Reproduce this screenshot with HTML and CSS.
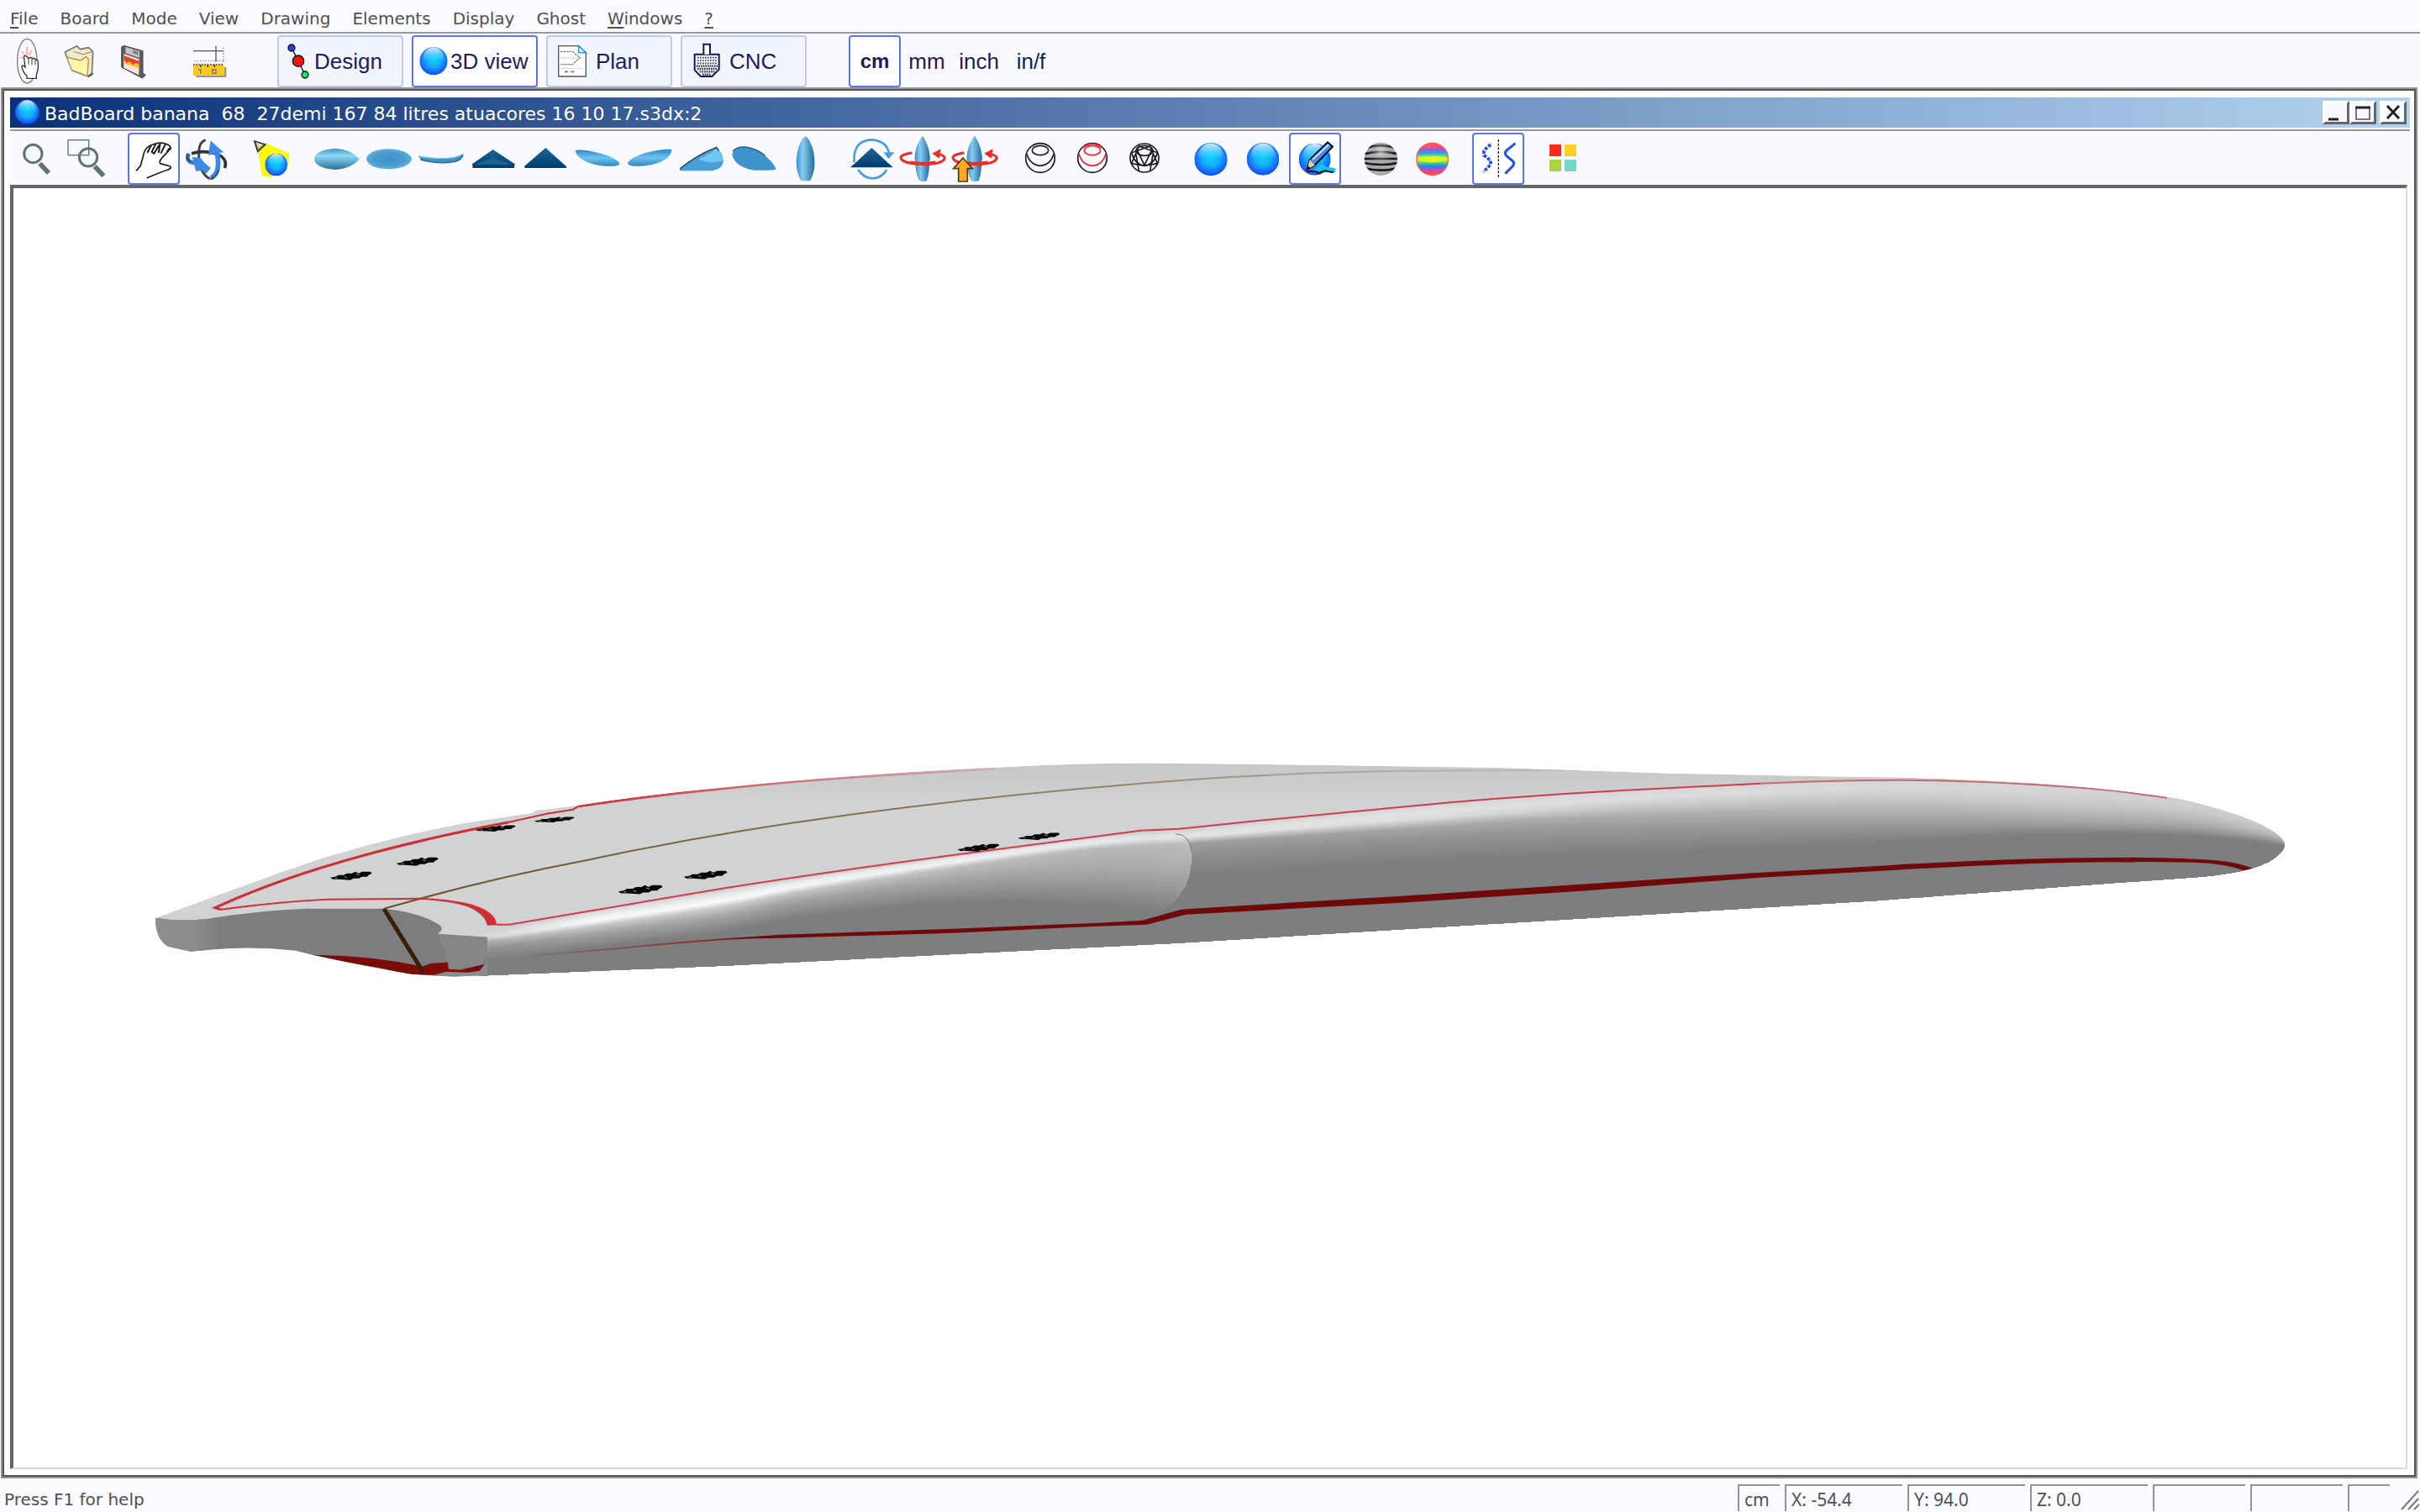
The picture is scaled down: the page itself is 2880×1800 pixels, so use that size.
FILE: index.html
```html
<!DOCTYPE html>
<html lang="en">
<head>
<meta charset="utf-8">
<title>BadBoard banana - 3D view</title>
<link rel="stylesheet" href="styles.css">
</head>
<body>
<svg class="defs" width="0" height="0" aria-hidden="true">
  <defs>
    <radialGradient id="ball" cx=".5" cy=".42" r=".6"><stop offset="0" stop-color="#08d4ff"/><stop offset=".45" stop-color="#14b0fa"/><stop offset="1" stop-color="#1440ff"/></radialGradient>
    <linearGradient id="gloss" x2="0" y2="1"><stop offset="0" stop-color="#fff" stop-opacity=".85"/><stop offset=".35" stop-color="#bff4ff" stop-opacity=".3"/><stop offset=".55" stop-color="#fff" stop-opacity="0"/></linearGradient>
    <linearGradient id="bottomView" x2="0" y2="1"><stop offset="0" stop-color="#3f96bf"/><stop offset=".35" stop-color="#8fd8fa"/><stop offset="1" stop-color="#2c6f94"/></linearGradient>
    <radialGradient id="deckView"><stop offset="0" stop-color="#4091c8"/><stop offset=".7" stop-color="#4a9cd0"/><stop offset="1" stop-color="#5fb2dd"/></radialGradient>
    <linearGradient id="upright"><stop offset="0" stop-color="#3590cc"/><stop offset=".35" stop-color="#86ccf0"/><stop offset="1" stop-color="#246a9c"/></linearGradient>
    <linearGradient id="pyramid" x2="0" y2="1"><stop offset="0" stop-color="#1a6598"/><stop offset="1" stop-color="#003c6e"/></linearGradient>
    <linearGradient id="tilt" x2="0" y2="1"><stop offset="0" stop-color="#2c8ac4"/><stop offset=".5" stop-color="#6cc4f4"/><stop offset="1" stop-color="#2f86b8"/></linearGradient>
    <linearGradient id="rainbow" x2="0" y2="1"><stop offset="0" stop-color="#f66"/><stop offset=".12" stop-color="#ff4a7a"/><stop offset=".22" stop-color="#8a60e8"/><stop offset=".32" stop-color="#20a8f0"/><stop offset=".4" stop-color="#60e070"/><stop offset=".46" stop-color="#d8f420"/><stop offset=".54" stop-color="#d8f420"/><stop offset=".63" stop-color="#30d090"/><stop offset=".72" stop-color="#2080f0"/><stop offset=".82" stop-color="#b050d0"/><stop offset=".9" stop-color="#ff4058"/><stop offset="1" stop-color="#ff5050"/></linearGradient>
    <radialGradient id="rim"><stop offset="0" stop-color="#ff5050" stop-opacity="0"/><stop offset=".8" stop-color="#ff5050" stop-opacity="0"/><stop offset="1" stop-color="#ff5050" stop-opacity=".7"/></radialGradient>
    <symbol id="sphere" viewBox="0 0 100 100"><circle cx="50" cy="50" r="50" fill="url(#ball)"/><ellipse cx="50" cy="42" rx="38" ry="41" fill="url(#gloss)"/></symbol>
    <symbol id="turnboard" viewBox="0 0 174 174">
      <path d="M84 6C108 40 116 120 98 166Q86 170 72 166C48 120 58 40 84 6Z" fill="url(#upright)"/>
      <path d="M46 66C20 70 0 76 8 88C22 110 140 114 160 90C166 80 158 74 144 72" fill="none" stroke="#f22a20" stroke-width="9"/>
      <path d="M118 68L148 52L144 86Z" fill="#f22a20"/>
      <path d="M84 6C104 36 112 70 110 94Q84 100 56 94C54 60 64 32 84 6Z" fill="url(#upright)"/>
      <path d="M40 99Q84 108 130 99" fill="none" stroke="#f22a20" stroke-width="9"/>
    </symbol>
  </defs>
</svg>

<nav class="menu">
  <a href="#file"><u>F</u>ile</a><a href="#board">Board</a><a href="#mode">Mode</a><a href="#view">View</a><a href="#drawing">Drawing</a><a href="#elements">Elements</a><a href="#display">Display</a><a href="#ghost">Ghost</a><a href="#windows"><u>W</u>indows</a><a href="#help"><u>?</u></a>
</nav>

<div class="toolbar main-tools">
  <div class="group">
    <button class="tool" aria-label="New board"><svg viewBox="12 132 174 174">
      <ellipse cx="97" cy="218" rx="35" ry="79" fill="#fdfdff" stroke="#777" stroke-width="4"/>
      <path d="M96 168V196M76 182L90 200M114 180L102 198M72 206H88M106 206H124" stroke="#fbb" stroke-width="7"/>
      <path d="M94 200Q84 196 86 208L90 240Q78 228 78 240Q84 262 96 270V280H130V266Q138 250 136 222Q136 212 128 214Q124 206 116 210Q110 202 101 208Z" fill="#fff" stroke="#333" stroke-width="4"/>
      <path d="M102 210V230M114 212V232M126 216V232" stroke="#333" stroke-width="3"/></svg></button>
    <button class="tool" aria-label="Open"><svg viewBox="198 132 174 174">
      <path d="M232 186L274 164L286 176L316 170L332 184L328 266L316 274L258 252Z" fill="#f4e9c0" stroke="#777" stroke-width="5" stroke-linejoin="round"/>
      <path d="M262 184L298 194L330 184" fill="none" stroke="#999" stroke-width="4"/>
      <path d="M234 196L244 206L288 216L308 202L316 212L312 272L256 250Z" fill="#fdf5a8" stroke="#a09468" stroke-width="4" stroke-linejoin="round"/>
      <path d="M316 272L332 262" stroke="#555" stroke-width="7"/></svg></button>
    <button class="tool" aria-label="Save"><svg viewBox="384 132 174 174">
      <path d="M434 168L442 163L510 182V262L520 268L508 279L434 240Z" fill="#5c5e62" stroke="#444" stroke-width="3"/>
      <path d="M448 168L498 182V206L448 190Z" fill="#c4c6ca"/><path d="M474 178L494 184V198L474 190Z" fill="#888"/>
      <path d="M442 192L496 211V268L442 242Z" fill="#fbe6dc"/><path d="M442 198L496 218V230L484 226L474 232L462 220L452 226L442 214Z" fill="#e8432a"/><path d="M442 214L452 226L462 220L474 232L484 226L496 230V244L442 226Z" fill="#ffc020"/></svg></button>
  </div>
  <div class="group">
    <button class="tool" aria-label="Measure"><svg viewBox="654 132 174 174">
      <path d="M690 182H798M771 164V220" stroke="#555" stroke-width="4"/><path d="M798 170V222M694 217H798" stroke="#888" stroke-width="4" stroke-dasharray="4 6"/>
      <path d="M700 272H804V240" fill="none" stroke="#999" stroke-width="8"/><path d="M690 232H800V270H690Z" fill="#fbc81c"/>
      <path d="M690 231H800" stroke="#222" stroke-width="5" stroke-dasharray="5 5"/><path d="M716 232V240M742 232V240M766 232V240" stroke="#222" stroke-width="4"/>
      <path d="M708 249H716V263" fill="none" stroke="#777" stroke-width="4"/><rect x="758" y="249" width="13" height="13" fill="none" stroke="#777" stroke-width="4"/></svg></button>
  </div>
  <div class="group modes">
    <button class="mode"><svg width="42" height="58" viewBox="996 132 126 174"><path d="M1041 170L1065 218L1089 267" stroke="#111" stroke-width="4"/><circle cx="1041" cy="171" r="12" fill="#2040f0" stroke="#111" stroke-width="4"/><circle cx="1065" cy="218" r="20" fill="#f4160e" stroke="#111" stroke-width="4"/><circle cx="1089" cy="267" r="12" fill="#14e860" stroke="#111" stroke-width="4"/></svg>Design</button>
    <button class="mode on"><svg width="44" height="58" viewBox="66 132 132 174"><use href="#sphere" x="88" y="168" width="100" height="100"/></svg>3D view</button>
    <button class="mode"><svg width="57" height="58" viewBox="546 132 171 174"><path d="M584 164H656L682 190V273H584Z" fill="#fff" stroke="#555" stroke-width="4"/><path d="M656 164V188H682Z" fill="#fff" stroke="#2a98c8" stroke-width="5"/><path d="M590 184H634L660 206L634 230H590" fill="none" stroke="#777" stroke-width="4" stroke-dasharray="8 3"/><path d="M590 207H672M592 244H670" stroke="#bbb" stroke-width="4" stroke-dasharray="4 5"/><path d="M606 256h12M628 256h12" stroke="#777" stroke-width="5"/></svg>Plan</button>
    <button class="mode"><svg width="56" height="58" viewBox="1026 132 168 174"><path d="M1070 194H1157V248L1132 273H1092L1070 250Z" fill="#f8f8ff" stroke="#141460" stroke-width="6" stroke-linejoin="round"/><path d="M1102 194V158H1125V194" fill="#fff" stroke="#141460" stroke-width="6"/><path d="M1080 206H1150M1080 216H1150M1080 226H1150" stroke="#334" stroke-width="5" stroke-dasharray="5 4"/><path d="M1076 236H1152M1080 246H1150M1088 256H1142M1098 266H1130" stroke="#334" stroke-width="7" stroke-dasharray="5 3"/></svg>CNC</button>
  </div>
  <div class="group">
    <button class="tool unit on">cm</button><button class="tool unit">mm</button><button class="tool unit">inch</button><button class="tool unit">in/f</button>
  </div>
</div>

<main class="window">
  <header class="titlebar">
    <svg width="30" height="30" viewBox="0 0 100 100"><use href="#sphere" width="96" height="96"/></svg>
    <h1>BadBoard banana  68  27demi 167 84 litres atuacores 16 10 17.s3dx:2</h1>
    <div class="controls">
      <button aria-label="Minimize"><svg viewBox="0 0 24 20"><path d="M3 18H15" stroke="#222" stroke-width="3"/></svg></button>
      <button aria-label="Maximize"><svg viewBox="0 0 24 20"><path d="M4 4V18H20V4" fill="none" stroke="#777" stroke-width="2"/><path d="M3 4H21" stroke="#222" stroke-width="3"/></svg></button>
      <button class="close" aria-label="Close"><svg viewBox="0 0 24 20"><path d="M5 2L19 17M19 2L5 17" stroke="#222" stroke-width="3"/></svg></button>
    </div>
  </header>

  <div class="toolbar view-tools">
    <div class="group">
      <button class="tool" aria-label="Zoom"><svg viewBox="42 480 174 174"><path d="M142 584L174 618" stroke="#5f7377" stroke-width="17"/><circle cx="118" cy="549" r="32" fill="#f4f7fa" stroke="#5f7377" stroke-width="9"/></svg></button>
      <button class="tool" aria-label="Zoom window"><svg viewBox="228 480 174 174"><path d="M338 594L370 628" stroke="#5f7377" stroke-width="17"/><circle cx="315" cy="562" r="32" fill="#f4f7fa" stroke="#5f7377" stroke-width="9"/><rect x="243" y="500" width="74" height="54" fill="none" stroke="#5f7377" stroke-width="4"/></svg></button>
    </div>
    <div class="group">
      <button class="tool on" aria-label="Pan"><svg viewBox="462 480 174 174"><path d="M486 610L502 592L514 546Q520 524 546 516Q572 506 592 514Q608 518 610 530L580 562Q566 578 572 584L608 594Q614 600 600 606Q570 616 524 636" fill="none" stroke="#1c1c20" stroke-width="5" stroke-linejoin="round"/><path d="M540 518L526 546M556 514L542 542L550 548L568 518M572 512L566 546M590 516L574 548M606 528L596 542" fill="none" stroke="#1c1c20" stroke-width="6"/></svg></button>
      <button class="tool" aria-label="Rotate"><svg viewBox="648 480 174 174"><path d="M734 500Q712 506 710 540V560Q714 620 748 638" fill="none" stroke="#444" stroke-width="9"/><path d="M802 600Q814 570 780 552Q730 534 684 548" fill="none" stroke="#333" stroke-width="11"/><path d="M674 548Q660 580 698 582" fill="none" stroke="#2f7fd8" stroke-width="15"/><path d="M670 550Q664 568 680 578" fill="none" stroke="#333" stroke-width="4"/><path d="M686 560L700 612L722 608L736 620L752 600L728 580L716 564Z" fill="#3a8be6"/><path d="M774 540Q790 620 752 636" fill="none" stroke="#3a8be6" stroke-width="17"/><path d="M752 502L798 544L744 554Z" fill="#3a8be6"/><path d="M748 640Q776 632 780 606" fill="none" stroke="#333" stroke-width="4"/></svg></button>
    </div>
    <div class="group">
      <button class="tool" aria-label="Light"><svg viewBox="882 480 174 174"><path d="M920 540L952 512L1032 548L1030 590L968 632L936 630Z" fill="#fbf710"/><path d="M908 504L948 516L920 542Z" fill="#888" stroke="#222" stroke-width="4"/><path d="M914 508L938 516L924 530Z" fill="#f2e090"/><use href="#sphere" x="946" y="548" width="80" height="80"/></svg></button>
    </div>
    <div class="group">
      <button class="tool" aria-label="Bottom view"><svg viewBox="1116 480 174 174"><path d="M1122 568Q1124 536 1196 530Q1256 534 1283 568Q1256 602 1196 606Q1124 600 1122 568Z" fill="url(#bottomView)"/></svg></button>
      <button class="tool" aria-label="Deck view"><svg viewBox="-108 480 174 174"><path d="M-102 568C-98 520 50 520 60 568C50 616 -98 616 -102 568Z" fill="url(#deckView)"/></svg></button>
      <button class="tool" aria-label="Side view"><svg viewBox="78 480 174 174"><path d="M84 557Q160 570 210 562Q234 556 244 548Q242 572 212 578Q150 588 92 570Z" fill="#3d93c4"/><path d="M84 558Q160 571 210 563Q234 557 244 549" fill="none" stroke="#7cc4e8" stroke-width="4"/><path d="M92 570Q150 588 212 578Q240 570 243 554" fill="none" stroke="#2c5e7c" stroke-width="4"/></svg></button>
      <button class="tool" aria-label="Front view"><svg viewBox="264 480 174 174"><path d="M276 586L350 534L428 586L426 600H278Z" fill="url(#pyramid)"/><path d="M284 588L350 564L420 588" fill="#1b6294"/></svg></button>
      <button class="tool" aria-label="Back view"><svg viewBox="450 480 174 174"><path d="M462 594L538 528L614 596L610 600H464Z" fill="url(#pyramid)"/></svg></button>
      <button class="tool" aria-label="Perspective left"><svg viewBox="636 480 174 174"><path d="M644 540C650 524 800 556 802 586C794 602 660 596 644 540Z" fill="url(#tilt)"/></svg></button>
      <button class="tool" aria-label="Perspective right"><svg viewBox="822 480 174 174"><path d="M988 534C940 530 834 556 831 584C836 604 986 594 988 534Z" fill="url(#tilt)"/></svg></button>
      <button class="tool" aria-label="Perspective top"><svg viewBox="1008 480 174 174"><path d="M1016 602Q1080 552 1148 526C1182 560 1186 606 1122 610H1018Z" fill="#4a9fd8"/><path d="M1084 568Q1124 550 1148 530Q1170 552 1172 572Q1130 590 1084 568Z" fill="#6fc6f0"/><path d="M1018 602Q1080 552 1148 526L1156 538" fill="none" stroke="#1b3a50" stroke-width="4"/></svg></button>
      <button class="tool" aria-label="Perspective bottom"><svg viewBox="1194 480 174 174"><path d="M1204 552Q1206 526 1248 524C1300 526 1354 580 1360 604Q1356 610 1284 608Q1214 598 1204 552Z" fill="#4093cc"/><path d="M1206 540Q1220 524 1250 525Q1290 530 1322 556" fill="none" stroke="#27607e" stroke-width="4"/></svg></button>
      <button class="tool" aria-label="Upright view"><svg viewBox="1380 480 174 174"><path d="M1466 486C1490 500 1516 590 1482 646H1450C1416 590 1440 500 1466 486Z" fill="url(#upright)"/></svg></button>
    </div>
    <div class="group">
      <button class="tool" aria-label="Flip"><svg viewBox="144 480 174 174"><path d="M170 580Q164 500 234 499Q286 504 294 548M184 606Q202 636 236 637Q268 636 286 606" fill="none" stroke="#4a9fd8" stroke-width="8"/><path d="M274 544L314 544L292 568Z" fill="#4a9fd8"/><path d="M156 598L232 528L308 598Z" fill="url(#pyramid)"/></svg></button>
      <button class="tool" aria-label="Spin"><svg viewBox="0 0 174 174"><use href="#turnboard" width="174" height="174"/></svg></button>
      <button class="tool" aria-label="Spin up"><svg viewBox="0 0 174 174"><use href="#turnboard" width="174" height="174"/><path d="M42 84L76 122H58V168H26V122H8Z" fill="#fba820" stroke="#4a3a10" stroke-width="5"/></svg></button>
    </div>
    <div class="group">
      <button class="tool" aria-label="Slices"><svg viewBox="750 480 174 174"><g fill="none" stroke="#1c1c20" stroke-width="5"><circle cx="834" cy="564" r="52"/><ellipse cx="834" cy="537" rx="29" ry="17"/><path d="M786 550Q798 590 834 592Q870 590 882 550"/></g></svg></button>
      <button class="tool" aria-label="Current slice"><svg viewBox="936 480 174 174"><g fill="none" stroke="#ff1c24" stroke-width="5"><circle cx="1020" cy="564" r="52" stroke="#1c1c20"/><path d="M984 528Q1020 500 1056 528M972 550Q984 590 1020 592Q1056 590 1068 550"/><ellipse cx="1020" cy="537" rx="29" ry="17"/></g></svg></button>
      <button class="tool" aria-label="Wireframe"><svg viewBox="1122 480 174 174"><g fill="none" stroke="#1c1c20" stroke-width="5"><circle cx="1206" cy="564" r="51"/><ellipse cx="1206" cy="538" rx="30" ry="18"/><path d="M1160 546Q1172 588 1206 592Q1240 588 1252 546M1178 532L1206 590L1234 532M1158 546L1226 522L1252 584M1254 546L1186 522L1160 584M1176 552L1186 610M1236 552L1226 610M1160 584L1206 592L1252 584"/></g></svg></button>
    </div>
    <div class="group">
      <button class="tool" aria-label="Shaded"><svg viewBox="-54 210 174 174"><use href="#sphere" x="-26" y="240" width="118" height="118"/></svg></button>
      <button class="tool" aria-label="Shaded smooth"><svg viewBox="132 210 174 174"><use href="#sphere" x="161" y="240" width="116" height="116"/></svg></button>
      <button class="tool on" aria-label="Drawing on board"><svg viewBox="318 210 174 174"><use href="#sphere" x="347" y="242" width="114" height="114"/><path d="M400 336L430 316L446 326L476 330L478 346H384Z" fill="#12c4ec"/><path d="M378 342H408L416 348L440 340L470 346" fill="none" stroke="#111" stroke-width="6"/><path d="M376 336L386 300L450 238L468 254L404 320Z" fill="#4a8ae8" stroke="#0a0a18" stroke-width="6"/><path d="M376 336L386 300L404 320Z" fill="#f8c898"/><path d="M396 300L454 246" stroke="#bfe4ff" stroke-width="7"/><path d="M374 340L380 322L388 330Z" fill="#111"/></svg></button>
    </div>
    <div class="group">
      <button class="tool" aria-label="Zebra"><svg viewBox="552 210 174 174"><defs><clipPath id="zc"><circle cx="640" cy="298" r="59"/></clipPath><radialGradient id="zg" cy=".3"><stop offset="0" stop-color="#fff" stop-opacity=".6"/><stop offset="1" stop-color="#888" stop-opacity="0"/></radialGradient></defs><g clip-path="url(#zc)"><path d="M580 238H700V358H580Z" fill="#aaa"/><path d="M580 260Q640 240 700 260M580 280Q640 264 700 280M580 297H700M580 312Q640 324 700 312M580 330Q640 346 700 330" fill="none" stroke="#1a1a1a" stroke-width="8"/><circle cx="640" cy="290" r="50" fill="url(#zg)"/></g></svg></button>
      <button class="tool" aria-label="Curvature"><svg viewBox="738 210 174 174"><circle cx="824" cy="298" r="59" fill="url(#rainbow)"/><path d="M766 298Q824 276 882 298Q824 322 766 298" fill="#e0f420"/><circle cx="824" cy="298" r="59" fill="url(#rim)"/></svg></button>
    </div>
    <div class="group">
      <button class="tool on" aria-label="Symmetry"><svg viewBox="972 210 174 174"><path d="M1060 228V368" stroke="#222" stroke-width="4" stroke-dasharray="9 5"/><path d="M1032 246L1016 260L1008 270V284L1032 304V318L1006 344" fill="none" stroke="#1f4cf0" stroke-width="11" stroke-dasharray="11 5"/><path d="M1120 242L1088 268Q1080 276 1088 286L1112 306Q1118 314 1110 324L1084 350" fill="none" stroke="#1f50f0" stroke-width="9"/></svg></button>
    </div>
    <div class="group">
      <button class="tool" aria-label="Colors"><svg viewBox="1206 210 174 174"><rect x="1242" y="246" width="42" height="42" fill="#ff2a1c"/><rect x="1296" y="246" width="42" height="42" fill="#ffd024"/><rect x="1242" y="300" width="42" height="42" fill="#a8d444"/><rect x="1296" y="300" width="42" height="42" fill="#74d8cc"/></svg></button>
    </div>
  </div>

  <div class="canvas">
    <svg class="board" viewBox="16 224 2848 1524" role="img" aria-label="3D view of the surfboard">
      <defs>
        <clipPath id="hull"><path id="outline" d="M185 1093L240 1073L339 1037L380 1023Q480 993 560 979L634 968L638 965L689 959Q770 946 860 938Q935 930 1006 925Q1110 917 1185 914Q1290 908 1400 909Q1600 911 1775 914L1989 921L2200 925Q2325 926 2429 933Q2521 940 2593 951Q2700 976 2718 1001Q2723 1010 2712 1018Q2695 1037 2621 1044Q2400 1060 2240 1072L1400 1123L860 1150L589 1161L540 1163L490 1160Q430 1150 372 1137L352 1132Q300 1126 249 1131L227 1133L200 1127Q185 1118 185 1093Z"/></clipPath>
        <clipPath id="rearPart"><path d="M570 900H1379V992Q1408 991 1414 999Q1422 1020 1414 1047Q1405 1072 1379 1084V1200H570Z"/></clipPath>
        <linearGradient id="corner" gradientUnits="userSpaceOnUse" x1="185" x2="262"><stop offset="0" stop-color="#8c8e90"/><stop offset=".6" stop-color="#8a8c8e"/><stop offset="1" stop-color="#7b7d7f"/></linearGradient>
        <linearGradient id="deck" gradientUnits="userSpaceOnUse" x1="0" y1="905" x2="0" y2="960"><stop offset="0" stop-color="#c4c6c7"/><stop offset="1" stop-color="#d0d2d4"/></linearGradient>
        <linearGradient id="faint" gradientUnits="userSpaceOnUse" x1="633" x2="1180"><stop offset="0" stop-color="#911" stop-opacity=".1"/><stop offset=".4" stop-color="#911" stop-opacity=".8"/><stop offset="1" stop-color="#801010"/></linearGradient>
        <linearGradient id="edgeRed" gradientUnits="userSpaceOnUse" x1="689" x2="1260"><stop offset="0" stop-color="#d03038"/><stop offset="1" stop-color="#d03038" stop-opacity="0"/></linearGradient>
        <linearGradient id="string" gradientUnits="userSpaceOnUse" x1="457" x2="1900"><stop offset="0" stop-color="#6b5028"/><stop offset=".6" stop-color="#948468"/><stop offset="1" stop-color="#a8a49c" stop-opacity=".3"/></linearGradient>
        <symbol id="plug" viewBox="0 0 50 12" preserveAspectRatio="none"><path d="M0 8L6 7L10 5L16 5L20 3L26 3L30 1L34 3L38 1L48 1L50 3L46 5L44 7L38 7L34 9L28 9L24 11L10 10L3 10Z"/><path d="M6 9l3-1M17 7l3 1M31 4l4 1" stroke="#888" stroke-width="1"/></symbol>
      </defs>
      <g clip-path="url(#hull)">
        <use href="#outline" fill="url(#deck)"/>
        <g id="front-rail"></g>
        <g clip-path="url(#rearPart)"><g id="rear-rail"></g></g>
        <path d="M1400 993Q1416 994 1418 1012" fill="none" stroke="#777" stroke-width="1"/>
        <path d="M185 1093Q214 1098 249 1094Q307 1084 365 1082H457Q500 1086 524 1102Q529 1107 521 1112L580 1116V1130L572 1152L534 1170H340L185 1150Z" fill="#7b7d7f"/>
        <path d="M185 1093Q214 1098 249 1094L262 1092V1135H185Z" fill="url(#corner)"/>
        <path d="M521 1113L580 1116Q580 1136 573 1150L534 1154L530 1132Z" fill="#848688"/>
        <path d="M490 1161L534 1157L573 1150L580 1145V1163H490Z" fill="#8a8c8e"/>
        <path d="M372 1137Q446 1138 502 1151L513 1147L533 1146L534 1154L548 1155L577 1148L571 1156L557 1158L531 1157L517 1161H490L455 1153L410 1145Z" fill="#7c0a06"/>
        <path d="M457 1082L504 1158" stroke="#382008" stroke-width="5"/>
        <path d="M457 1082L508 1068Q600 1043 700 1024Q850 992 1006 971Q1159 950 1312 937Q1480 921 1668 918L1882 917" fill="none" stroke="url(#string)" stroke-width="2"/>
        <path d="M606 979L651 969L682 964L689 960" fill="none" stroke="#d03038" stroke-width="2"/>
        <path d="M689 960Q770 948 860 939Q935 931 1006 926L1185 915" fill="none" stroke="url(#edgeRed)" stroke-width="3"/>
        <path d="M606 979Q480 1003 380 1034Q310 1056 256 1081L263 1083" fill="none" stroke="#cf3034" stroke-width="3"/>
        <path d="M263 1083Q339 1073 392 1071L504 1070" fill="none" stroke="#cf3034" stroke-width="2"/>
        <path d="M500 1069Q540 1071 562 1077Q590 1086 591 1100L606 1101L580 1102Q578 1090 560 1081Q540 1073 500 1071Z" fill="#cf3034"/>
        <path d="M591 1101H606L860 1058Q1000 1036 1159 1015L1358 989L1404 987L1500 977L1668 961Q1800 948 1936 941L2096 933" fill="none" stroke="#d23c48" stroke-width="2"/>
        <path d="M2096 933Q2240 927 2325 930Q2429 933 2521 942L2580 950" fill="none" stroke="#c86874" stroke-width="2"/>
        <path d="M633 1138L740 1129Q860 1117 930 1115L1134 1108" fill="none" stroke="url(#faint)" stroke-width="2"/>
        <path d="M860 1118L930 1113L1134 1106L1307 1099L1360 1096L1406 1083L1420 1082L1668 1067L1882 1053L2096 1039L2240 1031Q2400 1021 2540 1021Q2630 1022 2657 1027Q2672 1030 2682 1034L2675 1038Q2650 1028 2611 1027Q2520 1025 2400 1029Q2320 1032 2240 1037L2096 1045L1882 1061L1668 1075L1412 1089L1365 1101L1307 1103L1134 1111L930 1117Z" fill="#700a0a"/>
      </g>
      <g fill="#080808">
        <use href="#plug" x="393" y="1037" width="50" height="12"/><use href="#plug" x="472" y="1020" width="50" height="12"/>
        <use href="#plug" x="566" y="982" width="48" height="9"/><use href="#plug" x="636" y="972" width="48" height="8"/>
        <use href="#plug" x="736" y="1053" width="53" height="13"/><use href="#plug" x="814" y="1036" width="52" height="12"/>
        <use href="#plug" x="1140" y="1004" width="50" height="11"/><use href="#plug" x="1212" y="991" width="50" height="10"/>
      </g>
    </svg>
  </div>
</main>

<footer class="status">
  <p>Press F1 for help</p>
  <div class="panel w-unit">cm</div><div class="panel w-coord">X: -54.4</div><div class="panel w-coord">Y: 94.0</div><div class="panel w-coord">Z: 0.0</div><div class="panel w-blank"></div><div class="panel w-blank"></div><div class="panel w-unit"></div>
  <svg class="grip" width="30" height="32" viewBox="0 0 30 32"><path d="M8 30L28 8M16 30L28 17M23 30L29 24" stroke="#777" stroke-width="2"/></svg>
</footer>
<script src="rail.js"></script>
</body>
</html>
```
FILE: styles.css
```css
* { box-sizing: border-box; }

body {
  margin: 0;
  min-height: 100vh;
  display: flex;
  flex-direction: column;
  background: #fafbff;
  font-family: "DejaVu Sans", Verdana, sans-serif;
  font-size: 20px;
  color: #505054;
}

.defs { position: absolute; }

button {
  margin: 0;
  padding: 0;
  font: inherit;
  color: inherit;
  background: none;
}

.menu {
  display: flex;
  gap: 26px;
  height: 40px;
  padding: 7px 12px 0;
  line-height: 30px;
  border-bottom: 2px solid #989898;
}
.menu a { color: inherit; text-decoration: none; }
.menu u { text-decoration-thickness: 2px; text-underline-offset: 3px; }

.toolbar {
  display: flex;
  height: 64px;
  padding-top: 2px;
  background: #f8faff;
}
.group { display: flex; }

.main-tools {
  padding-left: 2px;
  font-family: "Liberation Sans", Arial, sans-serif;
  font-size: 26px;
  color: #1c1c60;
}
.main-tools .group:nth-child(2) { margin-left: 28px; }
.main-tools .modes { margin: 0 50px 0 52px; gap: 10px; }

.tool {
  width: 62px;
  height: 62px;
  border: 2px solid transparent;
  border-radius: 4px;
}
.tool svg, .mode svg { display: block; flex: none; }
.tool.on, .mode.on { background: #fff; border-color: #5b76ee; }

.mode {
  display: flex;
  align-items: center;
  width: 150px;
  height: 62px;
  border: 2px solid #bccaf6;
  border-radius: 4px;
  background: #f2f5fc;
  white-space: nowrap;
}
.unit.on { font-size: 24px; font-weight: bold; }

.window {
  flex: 1;
  display: flex;
  flex-direction: column;
  margin: 0 3px 0 1px;
  padding: 10px 7px 9px 9px;
  border: 2px solid #929292;
  box-shadow: inset 0 0 0 2px #555;
  background: #fdfdfe;
}

.titlebar {
  display: flex;
  align-items: center;
  height: 36px;
  padding: 0 4px 0 6px;
  background: linear-gradient(90deg, #0c3178, #b2d3f0);
  color: #fff;
}
.titlebar h1 {
  flex: 1;
  margin: 0;
  padding: 4px 0 0 5px;
  font-size: 22px;
  line-height: 28px;
  font-weight: normal;
  white-space: pre;
}
.controls { display: flex; }
.controls button {
  display: grid;
  place-items: center;
  width: 32px;
  height: 28px;
  border: 3px solid;
  border-color: #fff #666 #666 #fff;
  background: #f8f9fd;
}
.controls svg { width: 24px; height: 20px; }
.controls .close { margin-left: 4px; }

.view-tools {
  gap: 16px;
  height: 66px;
  margin-top: 2px;
  padding-top: 2px;
  border-top: 2px solid #989898;
}

.canvas {
  flex: 1;
  margin-right: 3px;
  border: solid;
  border-width: 4px 2px 2px 4px;
  border-color: #666 #dadada #dadada #666;
  background: #fff;
}
.board { display: block; width: 100%; }

.status { display: flex; gap: 6px; padding-top: 7px; }
.status p { flex: 1; margin: 0; padding: 3px 5px 0; line-height: 30px; }
.panel {
  height: 32px;
  padding-left: 6px;
  border: solid #929296;
  border-width: 2px 0 0 2px;
  font-family: "Noto Sans", "DejaVu Sans", sans-serif;
  font-size: 21px;
  line-height: 32px;
  white-space: nowrap;
}
.w-unit { width: 50px; }
.w-coord { width: 140px; }
.w-blank { width: 110px; }
.grip { display: block; }
```
FILE: rail.js
```js
// Shades the rails of the board. Each station is a cross-section at x,
// followed by pairs of height and grey level from deck to bottom.
const rear = [
  [560, 1112, 209, 1116, 212, 1119, 205, 1122, 170, 1132, 142, 1144, 126],
  [606, 1105, 210, 1109, 222, 1113, 220, 1118, 180, 1126, 148, 1140, 126],
  [700, 1085, 210, 1093, 240, 1098, 248, 1104, 196, 1113, 160, 1128, 126],
  [860, 1059, 210, 1067, 238, 1073, 250, 1080, 200, 1091, 162, 1109, 126],
  [955, 1045, 210, 1050, 238, 1055, 244, 1062, 192, 1073, 158, 1091, 126],
  [1159, 1016, 210, 1019, 232, 1023, 240, 1030, 188, 1046, 162, 1073, 126],
  [1312, 997, 210, 999, 228, 1003, 232, 1010, 184, 1036, 166, 1076, 126],
  [1430, 988, 210, 991, 222, 995, 226, 1004, 188, 1034, 172, 1090, 126]
];
const front = [
  [1360, 992, 212, 996, 224, 1001, 228, 1008, 158, 1024, 142, 1048, 126],
  [1420, 987, 212, 992, 224, 996, 228, 1004, 156, 1018, 142, 1042, 126],
  [1668, 962, 214, 969, 226, 976, 222, 987, 164, 1000, 146, 1026, 126],
  [1935, 941, 214, 951, 222, 960, 202, 971, 172, 986, 152, 1014, 126],
  [2240, 929, 214, 938, 216, 953, 196, 967, 174, 982, 152, 1002, 126],
  [2429, 933, 212, 942, 214, 957, 198, 971, 174, 982, 154, 993, 126],
  [2593, 951, 206, 957, 208, 967, 196, 978, 174, 986, 154, 994, 126],
  [2680, 974, 204, 980, 200, 986, 188, 991, 172, 996, 152, 1001, 126],
  [2724, 996, 200, 999, 190, 1001, 180, 1003, 166, 1005, 146, 1008, 126]
];
const NS = "http://www.w3.org/2000/svg";
const STEPS = 10;

function curve(points) {
  let d = "";
  for (let i = 0; i < points.length - 1; i++) {
    const a = points[Math.max(i - 1, 0)], b = points[i];
    const c = points[i + 1], e = points[Math.min(i + 2, points.length - 1)];
    const w = (c[0] - b[0]) / 3;
    const s1 = (c[1] - a[1]) / (c[0] - a[0]), s2 = (e[1] - b[1]) / (e[0] - b[0]);
    d += `C${b[0] + w} ${b[1] + w * s1} ${c[0] - w} ${c[1] - w * s2} ${c[0]} ${c[1]}`;
  }
  return d;
}

function shade(id, stations) {
  const group = document.getElementById(id);
  const x0 = stations[0][0], x1 = stations[stations.length - 1][0];
  for (let k = 0; k <= 5 * STEPS; k++) {
    const j = Math.min(Math.floor(k / STEPS), 4), t = k / STEPS - j;
    const mix = (s, o) => s[1 + 2 * j + o] * (1 - t) + s[3 + 2 * j + o] * t;
    const points = stations.map(s => [s[0], mix(s, 0)]);
    const grad = document.createElementNS(NS, "linearGradient");
    grad.id = `${id}-${k}`;
    grad.setAttribute("gradientUnits", "userSpaceOnUse");
    grad.setAttribute("x1", x0);
    grad.setAttribute("x2", x1);
    stations.forEach(s => {
      const stop = document.createElementNS(NS, "stop"), g = mix(s, 1);
      stop.setAttribute("offset", (s[0] - x0) / (x1 - x0));
      stop.setAttribute("stop-color", `rgb(${g - 1},${g},${g + 1})`);
      grad.append(stop);
    });
    const path = document.createElementNS(NS, "path");
    path.setAttribute("d", `M${points[0].join(" ")}${curve(points)}V1200H${x0}Z`);
    path.setAttribute("fill", `url(#${grad.id})`);
    group.append(grad, path);
  }
}

shade("front-rail", front);
shade("rear-rail", rear);
```
